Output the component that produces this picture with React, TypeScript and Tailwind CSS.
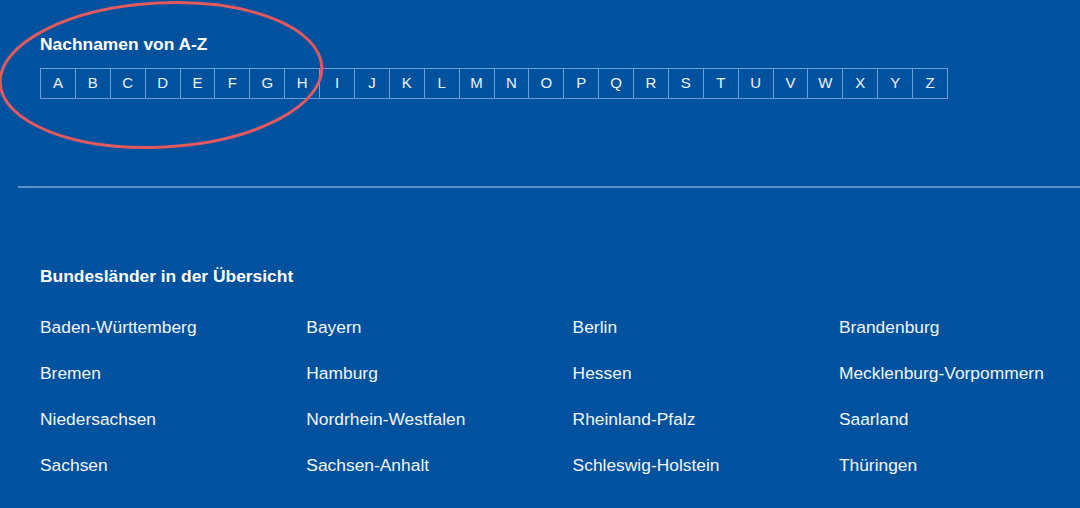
import React from "react";

const letters = "ABCDEFGHIJKLMNOPQRSTUVWXYZ".split("");
const states = [
  "Baden-Württemberg", "Bayern", "Berlin", "Brandenburg",
  "Bremen", "Hamburg", "Hessen", "Mecklenburg-Vorpommern",
  "Niedersachsen", "Nordrhein-Westfalen", "Rheinland-Pfalz", "Saarland",
  "Sachsen", "Sachsen-Anhalt", "Schleswig-Holstein", "Thüringen",
];

export default function App() {
  return (
    <div
      className="relative w-[1080px] h-[508px] overflow-hidden bg-[#00519e] text-white"
      style={{ fontFamily: '"Liberation Sans", Arial, sans-serif' }}
    >
      <div className="pl-[40px] pt-[34px]">
        <h2 className="text-[17.4px] leading-[20px] font-bold">Nachnamen von A-Z</h2>
        <div className="mt-[14px] w-[908px] h-[31px] grid grid-cols-[repeat(26,minmax(0,1fr))] border-l border-t border-b border-[#6c9fd9]">
          {letters.map((l) => (
            <div
              key={l}
              className="flex items-center justify-center border-r border-[#6c9fd9] text-[15px] text-[#eef4fb]"
            >
              {l}
            </div>
          ))}
        </div>
      </div>

      <div className="ml-[18px] mt-[87px] h-[1.5px] bg-[#5b92cf]" />

      <div className="pl-[40px] pt-[78px]">
        <h2 className="text-[17.4px] leading-[20px] font-bold">Bundesländer in der Übersicht</h2>
        <div className="mt-[31px] grid grid-cols-[266.3px_266.3px_266.3px_266.3px] gap-y-[26px]">
          {states.map((s) => (
            <div key={s} className="text-[17.4px] leading-[20px] text-[#f2f6fb]">
              {s}
            </div>
          ))}
        </div>
      </div>

      <svg className="absolute left-0 top-0 pointer-events-none" width="1080" height="508">
        <ellipse
          cx="161"
          cy="75"
          rx="161"
          ry="72"
          fill="none"
          stroke="#e25a5f"
          strokeWidth="3"
          transform="rotate(-3 161 75)"
        />
      </svg>
    </div>
  );
}
